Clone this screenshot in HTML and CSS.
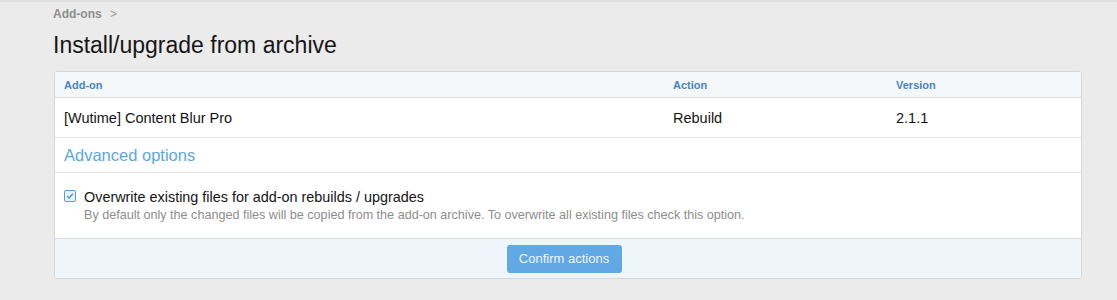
FILE: index.html
```html
<!DOCTYPE html>
<html>
<head>
<meta charset="utf-8">
<link rel="stylesheet" href="styles.css">
</head>
<body>
<div class="page">
  <div class="breadcrumb">Add-ons <span class="chev">&gt;</span></div>
  <h1 class="title">Install/upgrade from archive</h1>
  <div class="card">
    <div class="grid head">
      <div>Add-on</div>
      <div>Action</div>
      <div>Version</div>
    </div>
    <div class="grid row">
      <div>[Wutime] Content Blur Pro</div>
      <div>Rebuild</div>
      <div>2.1.1</div>
    </div>
    <div class="adv">Advanced options</div>
    <div class="opt">
      <span class="check">
        <svg width="12" height="12" viewBox="0 0 12 12"><rect x="0.5" y="0.5" width="11" height="11" rx="1.5" fill="#e9f2fb" stroke="#5d9ad6"/><path d="M3.2 6.1 L5.1 8 L8.9 3.8" fill="none" stroke="#4a8fd3" stroke-width="1.3"/></svg>
      </span>
      <div class="opt-text">
        <div class="opt-label">Overwrite existing files for add-on rebuilds / upgrades</div>
        <div class="opt-hint">By default only the changed files will be copied from the add-on archive. To overwrite all existing files check this option.</div>
      </div>
    </div>
    <div class="foot">
      <button class="btn">Confirm actions</button>
    </div>
  </div>
</div>
</body>
</html>
```
FILE: styles.css
```css
html, body {
  margin: 0;
  padding: 0;
}
body {
  background: #ebebeb;
  font-family: "Liberation Sans", Arial, sans-serif;
  color: #141414;
  border-top: 2px solid #e0e0e0;
}
.page {
  padding: 5px 35px 0 54px;
}
.breadcrumb {
  font-size: 12px;
  font-weight: bold;
  color: #8e8e8e;
  line-height: 14px;
  margin-left: -1px;
}
.chev {
  font-weight: normal;
  margin-left: 5px;
  color: #999;
}
.title {
  font-size: 23px;
  font-weight: normal;
  margin: 10px 0 0 -1px;
  line-height: 28px;
  color: #161616;
}
.card {
  margin-top: 12px;
  width: 1026px;
  background: #fff;
  border: 1px solid #d6d6d6;
  border-radius: 3px;
  overflow: hidden;
}
.grid {
  display: grid;
  grid-template-columns: 609px 223px 1fr;
  padding-left: 9px;
}
.head {
  background: #f5f8fb;
  height: 25px;
  align-items: center;
  font-size: 11px;
  font-weight: bold;
  color: #4b84bb;
  border-bottom: 1px solid #e0e0e0;
}
.row {
  height: 39px;
  align-items: center;
  font-size: 14.5px;
  border-bottom: 1px solid #e4e4e4;
}
.adv {
  height: 34px;
  line-height: 34px;
  padding-left: 9px;
  font-size: 16.5px;
  color: #5aa7e0;
  border-bottom: 1px solid #e4e4e4;
}
.opt {
  display: flex;
  padding: 16px 9px 15px 9px;
  gap: 8px;
}
.check {
  padding-top: 1px;
  line-height: 0;
}
.opt-label {
  font-size: 14.4px;
  line-height: 17px;
}
.opt-hint {
  font-size: 12.6px;
  color: #8d8d8d;
  line-height: 15px;
  margin-top: 2px;
}
.foot {
  background: #eef5fb;
  border-top: 1px solid #d9dde1;
  height: 39px;
  display: flex;
  justify-content: center;
  align-items: center;
}
.btn {
  background: #62a8e5;
  color: #eef6fd;
  border: none;
  border-radius: 3px;
  font-family: "Liberation Sans", Arial, sans-serif;
  font-size: 13px;
  width: 115px;
  height: 28px;
  padding: 0;
  margin-left: -8px;
  margin-top: 0;
}
```
